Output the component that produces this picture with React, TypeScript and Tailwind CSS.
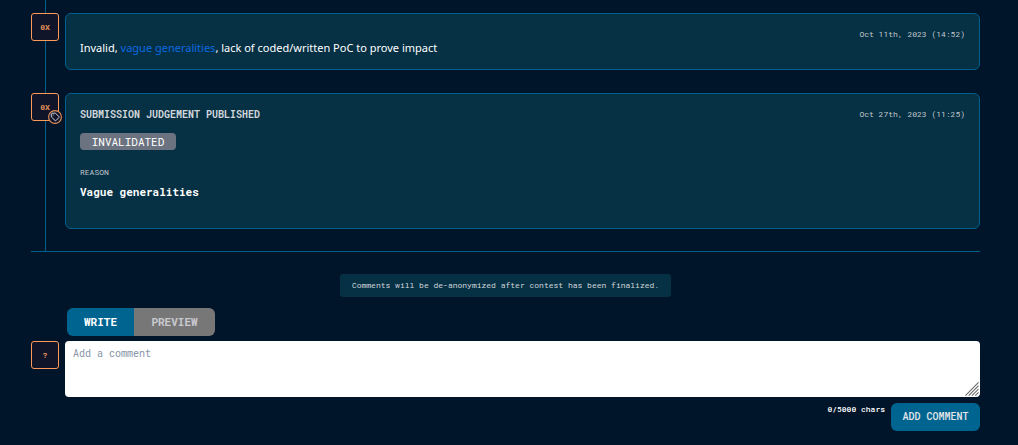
import { useState } from "react";
import type { ReactNode } from "react";

function Avatar({ label, badge = false }: { label: string; badge?: boolean }) {
  return (
    <div className="relative flex size-7 shrink-0 items-center justify-center rounded-[3px] border border-[#fd9a57] bg-[#10152a] text-[8px] font-bold leading-3 text-[#e8935a]">
      {label}
      {badge && (
        <svg viewBox="0 0 14 14" className="absolute -right-1 -bottom-1 size-3.5" fill="none" aria-hidden="true">
          <circle cx="7" cy="7" r="6.4" fill="#10152a" stroke="#e8935a" strokeWidth="1.1" />
          <path
            d="M3.2 4 4 3.2 7.4 3.1 10.9 6.6Q11.3 7 10.9 7.5L8.2 10.4Q7.5 10.9 7 10.4L3.4 7Z"
            stroke="#e5e7eb"
            strokeWidth="0.9"
            strokeLinejoin="round"
          />
          <circle cx="5.2" cy="5" r="0.6" fill="#e5e7eb" />
        </svg>
      )}
    </div>
  );
}

function TimelineItem({ badge, children }: { badge?: boolean; children: ReactNode }) {
  return (
    <li className="group flex gap-1.5">
      <div className="flex w-7 shrink-0 flex-col">
        <Avatar label="0X" badge={badge} />
        <div className="ml-3.5 w-px flex-1 bg-[#00608c]" />
      </div>
      <article className="mb-[23px] min-w-0 flex-1 rounded-md border border-[#00608c] bg-[#063043] px-3.5 group-last:mb-[22px]">
        {children}
      </article>
    </li>
  );
}

function Stamp({ children }: { children: string }) {
  return <time className="shrink-0 text-[8px] leading-3 text-[#c3c8cf]">{children}</time>;
}

export default function App() {
  const [comment, setComment] = useState("");
  const [tab, setTab] = useState("write");

  return (
    <main className="min-h-screen bg-[#001529] pr-[38px] pb-3.5 pl-[31px] font-['Roboto_Mono','DejaVu_Sans_Mono','Liberation_Mono',monospace] text-white">
      <div className="ml-3.5 h-[13px] w-px bg-[#00608c]" />
      <ol className="border-b border-[#00608c]">
        <TimelineItem>
          <div className="flex justify-end pt-3.5">
            <Stamp>Oct 11th, 2023 (14:52)</Stamp>
          </div>
          <p className="pb-3.5 font-['Noto_Sans',sans-serif] text-[11px] leading-[15px]">
            Invalid,{" "}
            <a href="#vague-generalities" className="text-[#0a6ae0]">
              vague generalities
            </a>
            , lack of coded/written PoC to prove impact
          </p>
        </TimelineItem>
        <TimelineItem badge>
          <div className="flex items-start justify-between pt-3.5">
            <h2 className="text-[10px] font-bold leading-[14px] text-[#d1d5db]">SUBMISSION JUDGEMENT PUBLISHED</h2>
            <Stamp>Oct 27th, 2023 (11:25)</Stamp>
          </div>
          <span className="mt-[11px] flex h-[17px] w-24 items-center justify-center rounded bg-[#6b7280] text-[11px] leading-4">
            INVALIDATED
          </span>
          <h3 className="mt-4 text-[8px] leading-3 text-[#c3c8cf]">REASON</h3>
          <p className="mt-1.5 mb-7 text-[11px] font-bold leading-4">Vague generalities</p>
        </TimelineItem>
      </ol>

      <div className="mt-[22px] flex justify-center">
        <p className="rounded-[3px] bg-[#063043] px-3 py-[5px] text-[8px] leading-[13px] text-[#d1d5db]">
          Comments will be de-anonymized after contest has been finalized.
        </p>
      </div>

      <div className="mt-[11px] ml-9 flex">
        <button
          type="button"
          aria-pressed={tab === "write"}
          onClick={() => setTab("write")}
          className="h-7 w-[67px] rounded-l-md bg-[#006491] text-[11px] font-bold"
        >
          WRITE
        </button>
        <button
          type="button"
          aria-pressed={tab === "preview"}
          onClick={() => setTab("preview")}
          className="h-7 w-[81px] rounded-r-md bg-[#777777] text-[11px] font-bold text-[#c9c9cf]"
        >
          PREVIEW
        </button>
      </div>

      <form className="mt-[5px]" onSubmit={(event) => event.preventDefault()}>
        <div className="flex gap-1.5">
          <Avatar label="?" />
          <div className="relative flex min-w-0 flex-1">
            <textarea
              aria-label="Comment"
              placeholder="Add a comment"
              maxLength={5000}
              value={comment}
              onChange={(event) => setComment(event.target.value)}
              className="h-14 w-full resize-none rounded bg-white px-2 py-1.5 text-[10px] leading-[14px] text-gray-900 placeholder:text-[#8794a8]"
            />
            <svg
              viewBox="0 0 15 15"
              className="pointer-events-none absolute right-px bottom-px size-3.5"
              stroke="#666666"
              strokeWidth="1.1"
              aria-hidden="true"
            >
              <path d="M0.5 14.5 14.5 0.5M4 14.5 14.5 4M7.5 14.5 14.5 7.5M11 14.5 14.5 11" />
            </svg>
          </div>
        </div>
        <div className="mt-1.5 flex items-start justify-end gap-1.5">
          <span className="text-[8px] leading-3 font-medium">{comment.length}/5000 chars</span>
          <button type="submit" className="h-7 w-[89px] rounded-md bg-[#006491] pb-0.5 text-[10px] font-medium text-[#e5e7eb]">
            ADD COMMENT
          </button>
        </div>
      </form>
    </main>
  );
}
